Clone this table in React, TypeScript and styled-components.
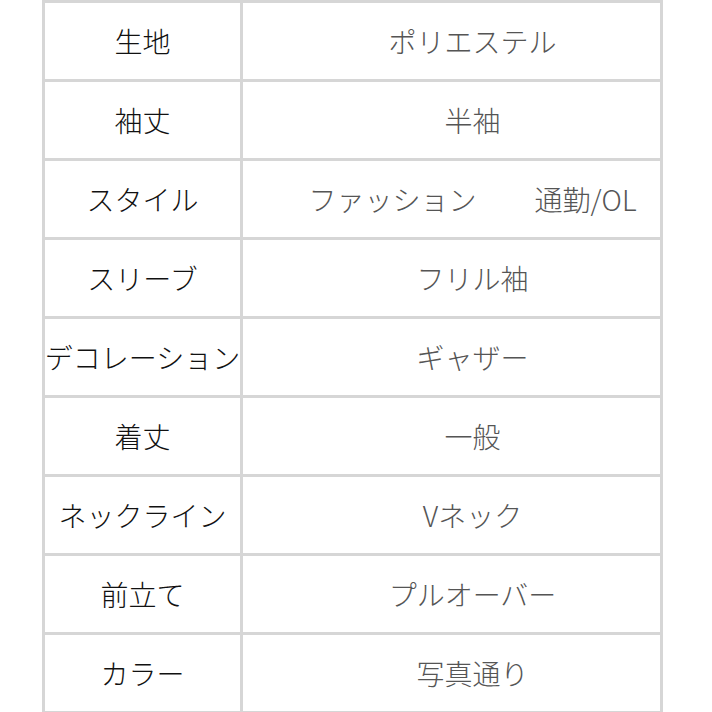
import { Fragment } from "react";
import styled, { createGlobalStyle } from "styled-components";

const GlobalStyle = createGlobalStyle`
  html, body {
    margin: 0;
    padding: 0;
    background: #ffffff;
  }
  body {
    font-family: "Noto Sans CJK JP", "Noto Sans", sans-serif;
  }
`;

const Page = styled.div`
  width: 712px;
  height: 712px;
  overflow: hidden;
  padding-left: 42px;
  box-sizing: border-box;
`;

const SpecGrid = styled.div`
  display: grid;
  grid-template-columns: 195px 417px;
  grid-auto-rows: 76px;
  gap: 3px;
  padding: 3px;
  width: fit-content;
  background: #d6d6d6;
`;

const Cell = styled.div<{ $value?: boolean }>`
  background: #ffffff;
  display: flex;
  align-items: center;
  justify-content: center;
  white-space: nowrap;
  font-size: 28px;
  font-weight: 300;
  line-height: 1;
  color: ${(p) => (p.$value ? "#555555" : "#111111")};
  padding-left: ${(p) => (p.$value ? "42px" : "0")};
`;

const Words = styled.span`
  display: flex;
  gap: 58px;
`;

const rows: { label: string; value: string[] }[] = [
  { label: "生地", value: ["ポリエステル"] },
  { label: "袖丈", value: ["半袖"] },
  { label: "スタイル", value: ["ファッション", "通勤/OL"] },
  { label: "スリーブ", value: ["フリル袖"] },
  { label: "デコレーション", value: ["ギャザー"] },
  { label: "着丈", value: ["一般"] },
  { label: "ネックライン", value: ["Vネック"] },
  { label: "前立て", value: ["プルオーバー"] },
  { label: "カラー", value: ["写真通り"] },
];

export default function App() {
  return (
    <>
      <GlobalStyle />
      <Page>
        <SpecGrid>
          {rows.map((r) => (
            <Fragment key={r.label}>
              <Cell>{r.label}</Cell>
              <Cell $value>
                <Words>
                  {r.value.map((v) => (
                    <span key={v}>{v}</span>
                  ))}
                </Words>
              </Cell>
            </Fragment>
          ))}
        </SpecGrid>
      </Page>
    </>
  );
}
